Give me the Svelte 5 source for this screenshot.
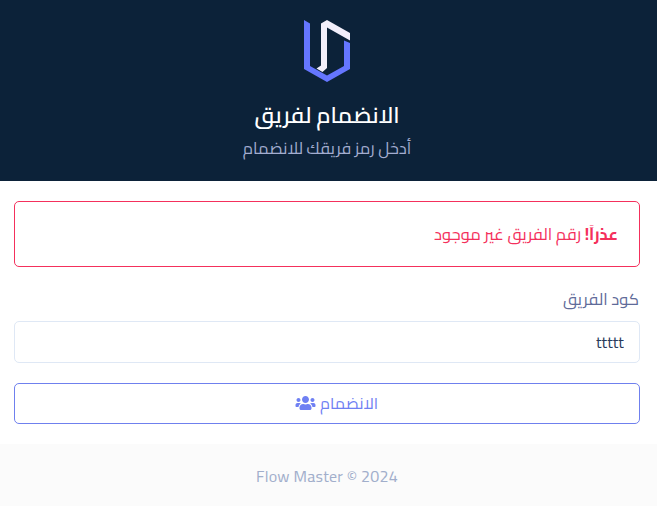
<script>
  let code = $state('ttttt');
</script>

<main class="page" dir="rtl">
  <header class="hero">
    <svg class="logo" width="46" height="62" viewBox="0 0 46 62">
      <path fill="#6576ff" d="M0 0L6 3.5V46L23 55.5L40 46V20.5L46 23V49L23 62L0 49Z" />
      <path fill="#f2effb" d="M23 0L46 13V20.5L23 7.5V48L18.5 52L12.5 48.5L17 45.500V3.500Z" />
    </svg>
    <h1>الانضمام لفريق</h1>
    <p>أدخل رمز فريقك للانضمام</p>
  </header>

  <section class="body">
    <div class="alert" role="alert">
      <span><strong>عذراً!</strong> رقم الفريق غير موجود</span>
    </div>
    <label for="code">كود الفريق</label>
    <input id="code" bind:value={code} />
    <button type="button">
      <span>الانضمام</span>
      <svg width="21" height="16" viewBox="0 0 640 512">
        <path fill="currentColor" d="M96 224c35.300 0 64-28.700 64-64s-28.700-64-64-64-64 28.700-64 64 28.700 64 64 64zm448 0c35.300 0 64-28.700 64-64s-28.700-64-64-64-64 28.700-64 64 28.700 64 64 64zm32 32h-64c-17.600 0-33.500 7.100-45.100 18.600 40.300 22.100 68.900 62 75.100 109.400h66c17.700 0 32-14.300 32-32v-32c0-35.300-28.700-64-64-64zm-256 0c61.900 0 112-50.100 112-112S381.900 32 320 32 208 82.100 208 144s50.100 112 112 112zm76.800 32h-8.300c-20.800 10-43.900 16-68.500 16s-47.600-6-68.500-16h-8.300C179.600 288 128 339.600 128 403.200V432c0 26.500 21.500 48 48 48h288c26.500 0 48-21.500 48-48v-28.800c0-63.600-51.600-115.200-115.200-115.200zm-223.700-13.400C161.500 263.100 145.600 256 128 256H64c-35.300 0-64 28.700-64 64v32c0 17.700 14.300 32 32 32h65.900c6.300-47.400 34.900-87.300 75.200-109.400z" />
      </svg>
    </button>
  </section>

  <footer dir="ltr">Flow Master © 2024</footer>
</main>

<style>
  :global(body) {
    margin: 0;
    background: #fff;
  }
  .page {
    font-family: Cairo, 'DejaVu Sans', sans-serif;
    font-size: 16.45px;
    height: 507px;
    overflow: hidden;
  }
  .hero {
    box-sizing: border-box;
    height: 181px;
    padding: 20px 3px 0 0;
    background: #0c2239;
    display: flex;
    flex-direction: column;
    align-items: center;
  }
  .logo {
    display: block;
  }
  h1 {
    margin: 15px 0 0;
    font-size: 22.5px;
    line-height: 36px;
    font-weight: 600;
    color: #fff;
  }
  p {
    margin: 2px 0 0;
    line-height: 26px;
    color: #a3add0;
  }
  .body {
    box-sizing: border-box;
    height: 263px;
    padding: 20px 17px 0 14px;
    display: flex;
    flex-direction: column;
  }
  .alert {
    box-sizing: border-box;
    height: 66px;
    padding: 0 21px;
    display: flex;
    align-items: center;
    border: 1px solid #f4305c;
    border-radius: 5px;
    color: #f4305c;
  }
  label {
    margin-top: 20px;
    padding-right: 1px;
    height: 34px;
    line-height: 25px;
    color: #5f6b99;
  }
  input {
    box-sizing: border-box;
    width: 100%;
    height: 42px;
    padding: 0 15px;
    border: 1px solid #dfe8f5;
    border-radius: 5px;
    background: #fff;
    color: #293a5b;
    font: inherit;
    font-size: 16px;
    outline: none;
  }
  button {
    box-sizing: border-box;
    height: 41px;
    margin-top: 20px;
    padding: 0 0 2px 19px;
    display: flex;
    align-items: center;
    justify-content: center;
    gap: 4px;
    border: 1px solid #6f80ee;
    border-radius: 5px;
    background: #fff;
    color: #6f80f3;
    font: inherit;
    font-size: 16px;
  }
  footer {
    box-sizing: border-box;
    height: 62px;
    padding: 1px 3px 0 0;
    display: flex;
    align-items: center;
    justify-content: center;
    background: #fbfbfb;
    color: #a1aecb;
    font-size: 16px;
    letter-spacing: 0.23px;
  }
</style>
